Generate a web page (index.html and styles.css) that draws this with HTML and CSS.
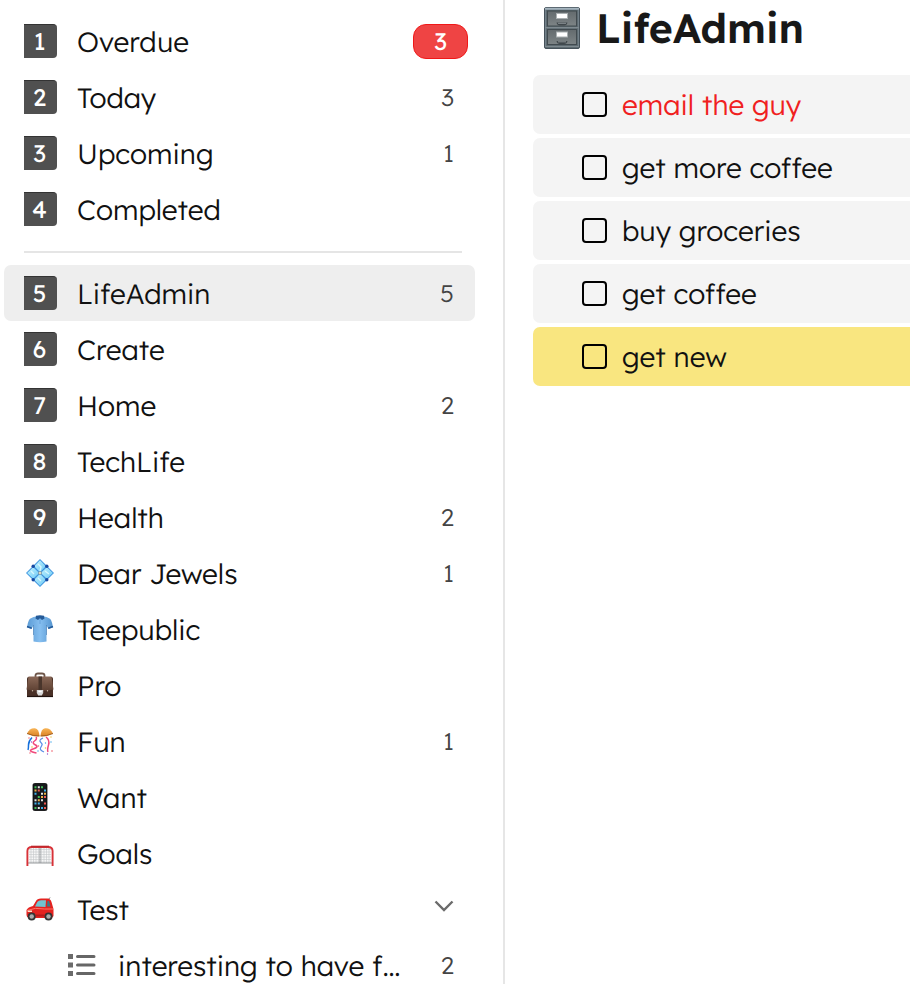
FILE: index.html
```html
<!DOCTYPE html>
<html lang="en">
<head>
    <meta charset="UTF-8">
    <meta name="viewport" content="width=device-width, initial-scale=1.0">
    <title>LifeAdmin</title>
    <link rel="stylesheet" href="styles.css">
</head>
<body>
    <div class="app">
        <nav class="sidebar">
            <a class="item" href="#overdue"><span class="key">1</span><span class="name">Overdue</span><span class="count alert">3</span></a>
            <a class="item" href="#today"><span class="key">2</span><span class="name">Today</span><span class="count">3</span></a>
            <a class="item" href="#upcoming"><span class="key">3</span><span class="name">Upcoming</span><span class="count">1</span></a>
            <a class="item" href="#completed"><span class="key">4</span><span class="name">Completed</span></a>
            <hr>
            <a class="item active" href="#lifeadmin"><span class="key">5</span><span class="name">LifeAdmin</span><span class="count">5</span></a>
            <a class="item" href="#create"><span class="key">6</span><span class="name">Create</span></a>
            <a class="item" href="#home"><span class="key">7</span><span class="name">Home</span><span class="count">2</span></a>
            <a class="item" href="#techlife"><span class="key">8</span><span class="name">TechLife</span></a>
            <a class="item" href="#health"><span class="key">9</span><span class="name">Health</span><span class="count">2</span></a>
            <a class="item" href="#dear-jewels">
                <span class="emoji">
                    <svg width="28" height="28" viewBox="0 0 28 28">
                        <defs>
                            <linearGradient id="gem" x1="0" y1="0" x2="1" y2="1">
                                <stop offset="0" stop-color="#c4f4ff"/>
                                <stop offset="1" stop-color="#6cc8f5"/>
                            </linearGradient>
                        </defs>
                        <path d="M14 0L28 14L14 28L0 14Z" fill="#3d94df"/>
                        <g fill="url(#gem)">
                            <path d="M14 1.2L19.8 7.2L14 13.2L8.2 7.2Z"/>
                            <path d="M7.2 8.2L13.2 14L7.2 19.8L1.2 14Z"/>
                            <path d="M20.8 8.2L26.8 14L20.8 19.8L14.8 14Z"/>
                            <path d="M14 14.8L19.8 20.8L14 26.8L8.2 20.8Z"/>
                        </g>
                        <path d="M12 5L15 8L14 12M5 12L8 15M19 12L23 15M12 19L15 22" fill="none" stroke="#e6fcff" stroke-width="1.4" opacity="0.8"/>
                        <g fill="#1748a0">
                            <circle cx="7.2" cy="7.2" r="1.7"/><circle cx="20.8" cy="7.2" r="1.7"/>
                            <circle cx="7.2" cy="20.8" r="1.7"/><circle cx="20.8" cy="20.8" r="1.7"/>
                        </g>
                        <circle cx="14" cy="14" r="2" fill="#879fa8"/>
                        <circle cx="14" cy="14" r="1" fill="#f4ead2"/>
                    </svg>
                </span>
                <span class="name">Dear Jewels</span><span class="count">1</span>
            </a>
            <a class="item" href="#teepublic">
                <span class="emoji">
                    <svg width="28" height="28" viewBox="0 0 28 28">
                        <defs>
                            <linearGradient id="shirt" x1="0" y1="0" x2="1" y2="0">
                                <stop offset="0" stop-color="#5b9bd5"/>
                                <stop offset="0.5" stop-color="#86bff0"/>
                                <stop offset="1" stop-color="#5595d0"/>
                            </linearGradient>
                        </defs>
                        <path d="M10 1.5Q4.5 2.5 3 5Q1.5 8 1 12.5L5.5 14L7.5 10.5V26.5Q14 28 20.5 26.5V10.5L22.5 14L27 12.5Q26.5 8 25 5Q23.5 2.5 18 1.5Q14 3.5 10 1.5Z" fill="url(#shirt)"/>
                        <path d="M7.5 10V20M20.5 10V20" stroke="#477fb8" stroke-width="0.7"/>
                        <path d="M1 11.5L5.8 13.2M27 11.5L22.2 13.2" stroke="#245a98" stroke-width="1.5"/>
                        <path d="M10 0.8Q14 -0.5 18 0.8L18.5 3.5L16 5L14 3.2L12 5L9.5 3.5Z" fill="#245a98"/>
                        <path d="M14 4V9" stroke="#6ba6de" stroke-width="1.2"/>
                    </svg>
                </span>
                <span class="name">Teepublic</span>
            </a>
            <a class="item" href="#pro">
                <span class="emoji">
                    <svg width="28" height="28" viewBox="0 0 28 28">
                        <defs>
                            <linearGradient id="leather" x1="0" y1="0" x2="0" y2="1">
                                <stop offset="0" stop-color="#8a6857"/>
                                <stop offset="1" stop-color="#5d4032"/>
                            </linearGradient>
                        </defs>
                        <path d="M9.5 6V4.5Q9.5 2.5 12 2.5H16Q18.5 2.5 18.5 4.5V6" fill="none" stroke="#6e5649" stroke-width="1.8"/>
                        <rect x="1" y="6" width="26" height="20" rx="1.5" fill="#493026"/>
                        <path d="M2.5 5.5H25.5L27.5 18.5Q20 20 14 20T0.5 18.5Z" fill="url(#leather)"/>
                        <rect x="12.5" y="5.5" width="3.5" height="14" fill="#49352b"/>
                        <path d="M1 25.5H27" stroke="#20130f" stroke-width="1.2"/>
                        <path d="M10.8 19H17.2V22L15.8 24.5H12.2L10.8 22Z" fill="#d8d8d8"/>
                        <path d="M12.3 20.5H15.7" stroke="#fff" stroke-width="1.5"/>
                        <circle cx="6.5" cy="19.7" r="0.7" fill="#c5b2a3"/><circle cx="21.5" cy="19.7" r="0.7" fill="#c5b2a3"/>
                    </svg>
                </span>
                <span class="name">Pro</span>
            </a>
            <a class="item" href="#fun">
                <span class="emoji">
                    <svg width="28" height="28" viewBox="0 0 28 28">
                        <defs>
                            <linearGradient id="ball" x1="0" y1="0" x2="0" y2="1">
                                <stop offset="0" stop-color="#f8b556"/>
                                <stop offset="1" stop-color="#d98126"/>
                            </linearGradient>
                        </defs>
                        <path d="M1 6.5Q4 0.5 9 1.2Q13 2 13.5 9Q8 10 1 6.5Z" fill="url(#ball)"/>
                        <path d="M27 6.5Q24 0.5 19 1.2Q15 2 14.5 9Q20 10 27 6.5Z" fill="url(#ball)"/>
                        <path d="M1 6.5Q8 9.5 13.5 9M27 6.5Q20 9.5 14.5 9" fill="none" stroke="#9a5718" stroke-width="0.9"/>
                        <g fill="none" stroke-width="1.5">
                            <path d="M6 10.5Q2.5 14 2.5 18T2 23" stroke="#1670dc"/>
                            <path d="M10 10Q11.5 12 8.500 14T9.500 18T7 22T10.500 26" stroke="#f0497c"/>
                            <path d="M17 11Q12.500 13 14.500 15T16 18T14.500 21T18 25" stroke="#5b8fe6" stroke-width="1.2"/>
                            <path d="M20 10Q24 13 22.500 18T22 25" stroke="#ef487a"/>
                        </g>
                        <g fill="#38a5e8"><circle cx="25" cy="15" r="0.7"/><circle cx="19.5" cy="16" r="0.7"/><circle cx="12" cy="24" r="0.7"/></g>
                        <g fill="#ef5968"><circle cx="3" cy="11" r="0.7"/><circle cx="12.5" cy="19" r="0.7"/><circle cx="26" cy="24" r="0.8"/><circle cx="4" cy="26" r="0.7"/></g>
                        <g fill="#f2c33c"><circle cx="6" cy="20" r="0.8"/><circle cx="19.5" cy="21" r="0.8"/><circle cx="25" cy="10" r="0.7"/></g>
                        <g fill="#8c59cc"><circle cx="5.5" cy="15" r="0.7"/><circle cx="21.5" cy="27" r="0.7"/></g>
                    </svg>
                </span>
                <span class="name">Fun</span><span class="count">1</span>
            </a>
            <a class="item" href="#want">
                <span class="emoji">
                    <svg width="28" height="28" viewBox="0 0 28 28">
                        <rect x="7" y="0.5" width="14" height="27" rx="1.5" fill="#17191c" stroke="#050505" stroke-width="0.8"/>
                        <path d="M8.5 3.2h2v2h-2zM15 3.2h2v2h-2zM11.8 13h2v2h-2zM8.5 24h2v2h-2z" fill="#43bd57"/>
                        <path d="M18 6.5h2v2h-2zM8.5 9.7h2v2h-2zM11.8 19.5h2v2h-2zM15 24h2v2h-2zM8.5 19.5h2v2h-2z" fill="#3faee6"/>
                        <path d="M11.8 3.2h2v2h-2zM15 9.7h2v2h-2zM8.5 16.2h2v2h-2zM15 16.2h2v2h-2zM11.8 24h2v2h-2z" fill="#e5e5e5"/>
                        <path d="M11.8 6.5h2v2h-2zM18 13h2v2h-2zM18 19.5h2v2h-2zM18 24h2v2h-2z" fill="#ed5751"/>
                        <path d="M8.5 6.5h2v2h-2zM18 9.7h2v2h-2zM15 13h2v2h-2zM11.8 16.2h2v2h-2z" fill="#edaf43"/>
                    </svg>
                </span>
                <span class="name">Want</span>
            </a>
            <a class="item" href="#goals">
                <span class="emoji">
                    <svg width="28" height="28" viewBox="0 0 28 28">
                        <path d="M3 8H25V24H3Z" fill="#f7f7f7"/>
                        <path d="M5 8V24M7.5 8V24M10 8V24M12.5 8V24M15.5 8V24M18 8V24M20.5 8V24M23 8V24M3 10.5H25M3 13H25M3 15.5H25M3 18H25M3 20.5H25M3 23H25" stroke="#c4c8ca" stroke-width="0.6"/>
                        <path d="M14 8V24M2 24H26" stroke="#8b8f91" stroke-width="0.9"/>
                        <path d="M1.4 27V12Q1.4 8 6 8H22Q26.600 8 26.600 12V27" fill="none" stroke="#d83238" stroke-width="1.9"/>
                        <path d="M5 7.5H23" stroke="#c0282c" stroke-width="1.6"/>
                    </svg>
                </span>
                <span class="name">Goals</span>
            </a>
            <a class="item" href="#test">
                <span class="emoji">
                    <svg width="28" height="28" viewBox="0 0 28 28">
                        <path d="M22 5L24 2.5" stroke="#666" stroke-width="0.9"/>
                        <path d="M0.500 15Q2 12 7 11L10 6Q11 3.800 15 3.500H21.500Q24.500 3.800 25.500 7L27.500 14V21Q27 23 24 23H3Q0.500 22.500 0.500 20Z" fill="#e4221f"/>
                        <path d="M9 11.500L11.500 6.800Q12.500 5.200 15 5.200H20L19.500 12Z" fill="#71c3d0"/>
                        <path d="M21.5 6H23L24.500 11.500H21Z" fill="#397c88"/>
                        <path d="M1 15.500Q9 12 18.500 14H27" fill="none" stroke="#ff7467" stroke-width="1"/>
                        <path d="M10 20.500H18.500" stroke="#b41818" stroke-width="2"/>
                        <path d="M2 15.500H6V17H1.500Z" fill="#ffe0c8"/>
                        <circle cx="5.700" cy="21.500" r="4" fill="#333"/><circle cx="5.700" cy="21.500" r="2.200" fill="#aaa"/>
                        <circle cx="22.500" cy="21.500" r="4" fill="#333"/><circle cx="22.500" cy="21.500" r="2.200" fill="#aaa"/>
                    </svg>
                </span>
                <span class="name">Test</span>
                <svg class="chevron" width="20" height="12" viewBox="0 0 20 12"><path d="M1.500 1.500L10 10L18.500 1.500" fill="none" stroke="#6b6b6b" stroke-width="2.400"/></svg>
            </a>
            <a class="item sub" href="#interesting">
                <svg width="28" height="24" viewBox="0 0 28 24">
                    <g fill="#6b6b6b"><rect x="0" y="1" width="5" height="5"/><rect x="0" y="9.5" width="5" height="5"/><rect x="0" y="18" width="5" height="5"/></g>
                    <path d="M9.500 3.500H26M9.500 12H26M9.500 20.500H26" stroke="#666" stroke-width="3" stroke-linecap="round"/>
                </svg>
                <span class="name">interesting to have f…</span><span class="count">2</span>
            </a>
        </nav>

        <main>
            <h1>
                <svg width="36" height="42" viewBox="0 0 36 42">
                    <defs>
                        <linearGradient id="drawer" x1="0" y1="0" x2="0" y2="1">
                            <stop offset="0" stop-color="#646b6e"/>
                            <stop offset="1" stop-color="#7d8486"/>
                        </linearGradient>
                    </defs>
                    <rect x="0.5" y="0.5" width="35" height="41" rx="1.5" fill="#5d6a70" stroke="#46525a"/>
                    <path d="M1 1.7H35" stroke="#a5b5bf" stroke-width="2"/>
                    <path d="M1.5 3V40M34.5 3V40" stroke="#73818a"/>
                    <rect x="3.5" y="4" width="29" height="15" fill="url(#drawer)" stroke="#414a4f"/>
                    <rect x="3.5" y="22.5" width="29" height="15" fill="url(#drawer)" stroke="#414a4f"/>
                    <path d="M1 20.7H35M1 39.5H35" stroke="#7f8a90" stroke-width="1.2"/>
                    <g fill="#fff" stroke="#a9afb1"><rect x="12.5" y="6.500" width="11" height="5"/><rect x="12.5" y="25" width="11" height="5"/></g>
                    <path d="M12.5 15.500H23.500Q23 18.500 20 18.500H16Q13 18.500 12.500 15.500ZM12.500 34H23.500Q23 37 20 37H16Q13 37 12.500 34Z" fill="#40484c"/>
                    <path d="M14 16.300H22M14 34.800H22" stroke="#8a9295"/>
                </svg>
                LifeAdmin
            </h1>
            <ul class="tasks">
                <li><label class="task overdue"><input type="checkbox">email the guy</label></li>
                <li><label class="task"><input type="checkbox">get more coffee</label></li>
                <li><label class="task"><input type="checkbox">buy groceries</label></li>
                <li><label class="task"><input type="checkbox">get coffee</label></li>
                <li><label class="task selected"><input type="checkbox">get new</label></li>
            </ul>
        </main>
    </div>
</body>
</html>
```
FILE: styles.css
```css
* {
    box-sizing: border-box;
}
body {
    margin: 0;
    font-family: Lexend, Inter, sans-serif;
    font-size: 28px;
    font-weight: 300;
    color: #111;
    background: #fff;
    text-rendering: geometricPrecision;
}
.app {
    display: flex;
    height: 100vh;
    overflow: hidden;
}
.sidebar {
    flex: 0 0 505px;
    padding: 13px 28px 0 4px;
    border-right: 2px solid #e6e6e6;
}
.item {
    display: flex;
    align-items: center;
    gap: 20px;
    height: 56px;
    padding: 0 21px 0 20px;
    border-radius: 7px;
    color: inherit;
    text-decoration: none;
}
.item.active {
    background: #eee;
}
.item.sub {
    padding-left: 64px;
    gap: 22px;
}
.sidebar hr {
    height: 2px;
    margin: 14px 13px 12px 20px;
    border: 0;
    background: #e5e5e5;
}
.key {
    width: 33px;
    height: 34px;
    border-top: 1px solid #333;
    border-radius: 0 4px 4px 0;
    padding-right: 2px;
    background: #505050;
    color: #fff;
    font-size: 24px;
    font-weight: 400;
    line-height: 33px;
    text-align: center;
}
.emoji {
    display: flex;
    justify-content: center;
    width: 33px;
    padding-right: 2px;
}
.name {
    flex: 1;
    white-space: nowrap;
}
.count {
    color: #444;
    font-size: 24px;
}
.count.alert {
    width: 55px;
    height: 35px;
    margin-right: -14px;
    border: 1px solid #f01818;
    border-radius: 13px;
    background: #ef4444;
    color: #fff;
    font-weight: 400;
    line-height: 33px;
    text-align: center;
}
.chevron {
    margin-bottom: 6px;
}

main {
    flex: 1;
    min-width: 0;
    padding: 4px 0 0 28px;
}
h1 {
    display: flex;
    align-items: center;
    gap: 16px;
    height: 48px;
    margin: 0 0 23px;
    padding-left: 11px;
    font-size: 41px;
    font-weight: 600;
    color: #181818;
}
.tasks {
    display: grid;
    gap: 4px;
    margin: 0;
    padding: 0;
    list-style: none;
}
.task {
    display: flex;
    align-items: center;
    gap: 15px;
    height: 59px;
    padding-left: 49px;
    border-radius: 7px 0 0 7px;
    background: #f4f4f4;
}
.task.overdue {
    color: #f02020;
}
.task.selected {
    background: #f9e680;
}
.task input {
    appearance: none;
    width: 25px;
    height: 25px;
    margin: 0;
    border: 2px solid #000;
    border-radius: 4px;
}
```
